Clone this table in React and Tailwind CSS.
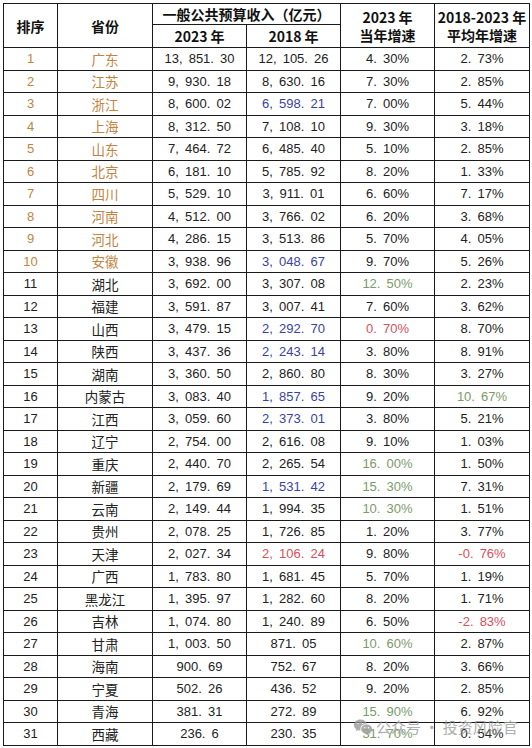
import React from "react";
import { RiWechatFill } from "react-icons/ri";

const O = "text-[#c08443]";
const B = "text-[#3b3f9e]";
const G = "text-[#7c9a6a]";
const R = "text-[#d4505c]";

const rows = [
  ["1", "广东", "13, 851. 30", "12, 105. 26", "4. 30%", "2. 73%"],
  ["2", "江苏", "9, 930. 18", "8, 630. 16", "7. 30%", "2. 85%"],
  ["3", "浙江", "8, 600. 02", "6, 598. 21", "7. 00%", "5. 44%", { c4: B }],
  ["4", "上海", "8, 312. 50", "7, 108. 10", "9. 30%", "3. 18%"],
  ["5", "山东", "7, 464. 72", "6, 485. 40", "5. 10%", "2. 85%"],
  ["6", "北京", "6, 181. 10", "5, 785. 92", "8. 20%", "1. 33%"],
  ["7", "四川", "5, 529. 10", "3, 911. 01", "6. 60%", "7. 17%"],
  ["8", "河南", "4, 512. 00", "3, 766. 02", "6. 20%", "3. 68%"],
  ["9", "河北", "4, 286. 15", "3, 513. 86", "5. 70%", "4. 05%"],
  ["10", "安徽", "3, 938. 96", "3, 048. 67", "9. 70%", "5. 26%", { c4: B }],
  ["11", "湖北", "3, 692. 00", "3, 307. 08", "12. 50%", "2. 23%", { c5: G }],
  ["12", "福建", "3, 591. 87", "3, 007. 41", "7. 60%", "3. 62%"],
  ["13", "山西", "3, 479. 15", "2, 292. 70", "0. 70%", "8. 70%", { c4: B, c5: R }],
  ["14", "陕西", "3, 437. 36", "2, 243. 14", "3. 80%", "8. 91%", { c4: B }],
  ["15", "湖南", "3, 360. 50", "2, 860. 80", "8. 30%", "3. 27%"],
  ["16", "内蒙古", "3, 083. 40", "1, 857. 65", "9. 20%", "10. 67%", { c4: B, c6: G }],
  ["17", "江西", "3, 059. 60", "2, 373. 01", "3. 80%", "5. 21%", { c4: B }],
  ["18", "辽宁", "2, 754. 00", "2, 616. 08", "9. 10%", "1. 03%"],
  ["19", "重庆", "2, 440. 70", "2, 265. 54", "16. 00%", "1. 50%", { c5: G }],
  ["20", "新疆", "2, 179. 69", "1, 531. 42", "15. 30%", "7. 31%", { c4: B, c5: G }],
  ["21", "云南", "2, 149. 44", "1, 994. 35", "10. 30%", "1. 51%", { c5: G }],
  ["22", "贵州", "2, 078. 25", "1, 726. 85", "1. 20%", "3. 77%"],
  ["23", "天津", "2, 027. 34", "2, 106. 24", "9. 80%", "-0. 76%", { c4: R, c6: R }],
  ["24", "广西", "1, 783. 80", "1, 681. 45", "5. 70%", "1. 19%"],
  ["25", "黑龙江", "1, 395. 97", "1, 282. 60", "8. 20%", "1. 71%"],
  ["26", "吉林", "1, 074. 80", "1, 240. 89", "6. 50%", "-2. 83%", { c6: R }],
  ["27", "甘肃", "1, 003. 50", "871. 05", "10. 60%", "2. 87%", { c5: G }],
  ["28", "海南", "900. 69", "752. 67", "8. 20%", "3. 66%"],
  ["29", "宁夏", "502. 26", "436. 52", "9. 20%", "2. 85%"],
  ["30", "青海", "381. 31", "272. 89", "15. 90%", "6. 92%", { c5: G }],
  ["31", "西藏", "236. 6", "230. 35", "31. 70%", "0. 54%", { c5: G }],
];

const cell = "border border-[#1a1a1a] text-center p-0 align-middle";
const num = "text-[13px] [word-spacing:2.5px] font-['Liberation_Sans','Noto_Sans_CJK_SC',sans-serif]";
const hd = "text-[14px] font-bold leading-[18px] text-[#111]";

export default function App() {
  return (
    <div className="w-[532px] h-[748px] bg-white pl-[3px] pt-[3px] relative overflow-hidden font-['Noto_Sans_CJK_SC','Liberation_Sans',sans-serif] text-[#111]">
      <table className="table-fixed border-collapse w-[526px]">
        <colgroup>
          <col className="w-[54px]" />
          <col className="w-[95px]" />
          <col className="w-[94px]" />
          <col className="w-[94px]" />
          <col className="w-[94px]" />
          <col className="w-[95px]" />
        </colgroup>
        <thead>
          <tr className="h-[21px]">
            <th rowSpan={2} className={`${cell} ${hd}`}>排序</th>
            <th rowSpan={2} className={`${cell} ${hd}`}>省份</th>
            <th colSpan={2} className={`${cell} ${hd}`}>一般公共预算收入（亿元）</th>
            <th rowSpan={2} className={`${cell} ${hd}`}>
              <div>2023 年</div>
              <div>当年增速</div>
            </th>
            <th rowSpan={2} className={`${cell} ${hd}`}>
              <div>2018-2023 年</div>
              <div>平均年增速</div>
            </th>
          </tr>
          <tr className="h-[23px]">
            <th className={`${cell} ${hd}`}>2023 年</th>
            <th className={`${cell} ${hd}`}>2018 年</th>
          </tr>
        </thead>
        <tbody>
          {rows.map((r) => {
            const s = r[6] || {};
            const top = parseInt(r[0], 10) <= 10;
            return (
              <tr key={r[0]} className="h-[22.5px]">
                <td className={`${cell} ${num} ${top ? O : "text-[#222]"}`}>{r[0]}</td>
                <td className={`${cell} text-[13.5px] leading-[20px] ${top ? O : "text-[#222]"}`}>{r[1]}</td>
                <td className={`${cell} ${num} text-[#222]`}>{r[2]}</td>
                <td className={`${cell} ${num} ${s.c4 || "text-[#222]"}`}>{r[3]}</td>
                <td className={`${cell} ${num} ${s.c5 || "text-[#222]"}`}>{r[4]}</td>
                <td className={`${cell} ${num} ${s.c6 || "text-[#222]"}`}>{r[5]}</td>
              </tr>
            );
          })}
        </tbody>
      </table>
      <div className="absolute left-[353px] top-[717px] flex items-center gap-[3px] text-[#9a9a9a] opacity-80 pointer-events-none">
        <RiWechatFill className="w-[20px] h-[20px]" />
        <span className="text-[15px] leading-[20px] font-['Noto_Sans_CJK_SC',sans-serif]">公众号 · 投资风险官</span>
      </div>
    </div>
  );
}
